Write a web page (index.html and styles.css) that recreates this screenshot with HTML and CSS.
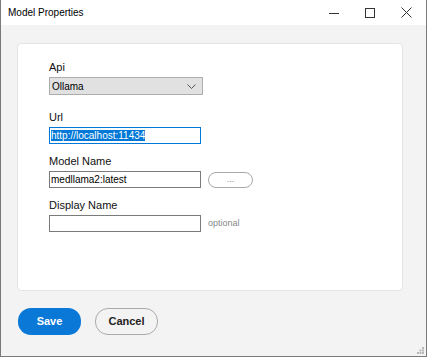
FILE: index.html
```html
<!DOCTYPE html>
<html lang="en">
<head>
    <meta charset="UTF-8">
    <title>Model Properties</title>
    <link rel="stylesheet" href="styles.css">
</head>
<body>
<div class="window">
    <div class="titlebar">
        <span class="title">Model Properties</span>
        <div class="controls">
            <span class="ctl">
                <svg width="10" height="10" viewBox="0 0 10 10"><path d="M0 5.5H10" stroke="#333" stroke-width="1"/></svg>
            </span>
            <span class="ctl">
                <svg width="10" height="10" viewBox="0 0 10 10"><rect x="0.5" y="0.5" width="9" height="9" fill="none" stroke="#333" stroke-width="1"/></svg>
            </span>
            <span class="ctl">
                <svg width="11" height="11" viewBox="0 0 11 11"><path d="M0.5 0.5L10.5 10.5M10.5 0.5L0.5 10.5" stroke="#333" stroke-width="1"/></svg>
            </span>
        </div>
    </div>
    <div class="client">
        <div class="card">
            <div class="field">
                <label>Api</label>
                <div class="select">
                    <span>Ollama</span>
                    <svg width="9" height="5" viewBox="0 0 9 5"><path d="M0.5 0.5L4.5 4.5L8.5 0.5" fill="none" stroke="#555" stroke-width="1"/></svg>
                </div>
            </div>
            <div class="field url">
                <label>Url</label>
                <div class="input focused"><span class="selected">http://localhost:11434</span></div>
            </div>
            <div class="field">
                <label>Model Name</label>
                <div class="row">
                    <div class="input">medllama2:latest</div>
                    <span class="browse">...</span>
                </div>
            </div>
            <div class="field">
                <label>Display Name</label>
                <div class="row">
                    <div class="input"></div>
                    <span class="hint">optional</span>
                </div>
            </div>
        </div>
        <div class="buttons">
            <span class="btn save">Save</span>
            <span class="btn cancel">Cancel</span>
        </div>
        <svg class="grip" width="7" height="7" viewBox="0 0 7 7">
            <rect x="5" y="0" width="2" height="2" fill="#b8b8b8"/>
            <rect x="2.5" y="2.5" width="2" height="2" fill="#b8b8b8"/>
            <rect x="5" y="2.5" width="2" height="2" fill="#b8b8b8"/>
            <rect x="0" y="5" width="2" height="2" fill="#b8b8b8"/>
            <rect x="2.5" y="5" width="2" height="2" fill="#b8b8b8"/>
            <rect x="5" y="5" width="2" height="2" fill="#b8b8b8"/>
        </svg>
    </div>
</div>
</body>
</html>
```

FILE: styles.css
```css
html, body {
    margin: 0;
    padding: 0;
}

body {
    font: 11px/13px "Liberation Sans", Arial, sans-serif;
    color: #000;
    background: #fff;
}

.window {
    width: 427px;
    height: 357px;
    box-sizing: border-box;
    border: 1px solid #7a7a7a;
    border-top: none;
    display: flex;
    flex-direction: column;
}

.titlebar {
    height: 25px;
    flex: none;
    display: flex;
    align-items: center;
    justify-content: space-between;
    background: #fff;
}

.title {
    padding-left: 7px;
    font: 10px "Liberation Sans", Arial, sans-serif;
    color: #000;
}

.controls {
    display: flex;
    height: 100%;
    padding-right: 2px;
}

.ctl {
    width: 36px;
    display: flex;
    align-items: center;
    justify-content: center;
}

.client {
    position: relative;
    flex: 1;
    background: #f3f3f3;
    padding: 18px 0 0 16px;
}

.card {
    width: 386px;
    height: 248px;
    box-sizing: border-box;
    background: #fff;
    border: 1px solid #e4e4e4;
    border-radius: 4px;
    padding: 17px 0 0 31px;
}

.field {
    margin-bottom: 11px;
}

.field.url {
    margin-top: 16px;
}

.field label {
    display: block;
    margin-bottom: 3px;
    color: #111;
}

.select {
    width: 154px;
    height: 18px;
    box-sizing: border-box;
    background: #e1e1e1;
    border: 1px solid #adadad;
    display: flex;
    align-items: center;
    justify-content: space-between;
    padding: 0 6px 0 2px;
    font-size: 10px;
}

.row {
    display: flex;
    align-items: center;
}

.input {
    width: 152px;
    height: 17px;
    box-sizing: border-box;
    border: 1px solid #7a7a7a;
    background: #fff;
    padding: 1px 1px 0 1px;
    line-height: 13px;
    font-size: 10px;
}

.input.focused {
    border-color: #0078d7;
}

.selected {
    background: #0078d7;
    color: #fff;
}

.browse {
    margin-left: 7px;
    width: 45px;
    height: 16px;
    box-sizing: border-box;
    border: 1px solid #a8a8a8;
    border-radius: 8px;
    color: #888;
    font-size: 9px;
    text-align: center;
    line-height: 12px;
}

.hint {
    margin-left: 7px;
    color: #888;
    font-size: 9px;
}

.buttons {
    display: flex;
    gap: 14px;
    margin-top: 17px;
    margin-left: 1px;
}

.btn {
    width: 63px;
    height: 27px;
    box-sizing: border-box;
    border-radius: 13px;
    display: flex;
    align-items: center;
    justify-content: center;
    font-weight: bold;
}

.save {
    background: #0a78d7;
    color: #fff;
}

.cancel {
    border: 1px solid #aaaaaa;
    color: #222;
}

.grip {
    position: absolute;
    right: 2px;
    bottom: 2px;
}
```
